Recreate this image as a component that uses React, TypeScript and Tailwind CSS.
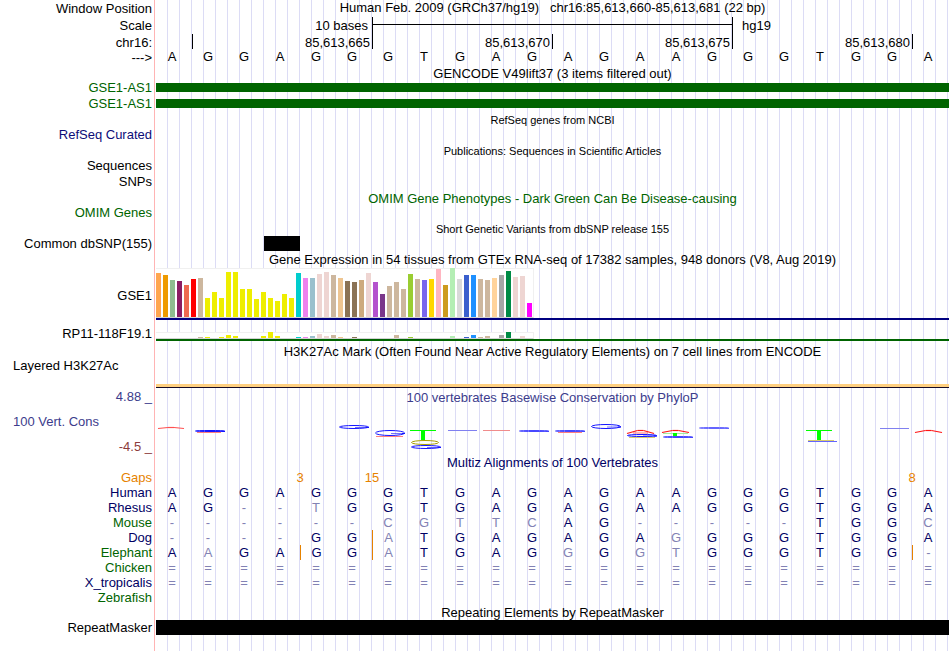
import type { ReactNode } from "react";
import clsx from "clsx";

const reference = "AGGAGGGTGAGAGAAGGGTGGA";

const positions = ["85,613,665", "85,613,670", "85,613,675", "85,613,680"];

// gaps: base index that an insertion marker stands in front of
const species = [
  { name: "Human", green: false, bases: reference, gaps: [] },
  { name: "Rhesus", green: false, bases: "AG--TGGTGAGAGAAGGGTGGA", gaps: [] },
  { name: "Mouse", green: true, bases: "------CGTTCAG-----TGGC", gaps: [] },
  { name: "Dog", green: false, bases: "----GGATGAGAGAGGGGTGGA", gaps: [6] },
  {
    name: "Elephant",
    green: true,
    bases: "AAGAGGATGAGGGGTGGGTGG-",
    gaps: [4, 6, 21],
  },
  { name: "Chicken", green: true, bases: "======================", gaps: [] },
  {
    name: "X_tropicalis",
    green: false,
    bases: "======================",
    gaps: [],
  },
  { name: "Zebrafish", green: true, bases: "", gaps: [] },
];

// [colour, GSE1 height, RP11-118F19.1 height]
const tissues: [string, number, number][] = [
  ["#ffa54f", 44, 0],
  ["#ee9a00", 42, 0],
  ["#8fbc8f", 37, 0],
  ["#8b1c62", 36, 0],
  ["#ee6a50", 32, 0],
  ["#ff0000", 38, 0],
  ["#cdb79e", 39, 1],
  ["#eeee00", 19, 1],
  ["#eeee00", 25, 0],
  ["#eeee00", 19, 1],
  ["#eeee00", 45, 3],
  ["#eeee00", 45, 2],
  ["#eeee00", 28, 0],
  ["#eeee00", 28, 0],
  ["#eeee00", 18, 0],
  ["#eeee00", 25, 2],
  ["#eeee00", 19, 6],
  ["#eeee00", 16, 2],
  ["#eeee00", 23, 0],
  ["#eeee00", 19, 0],
  ["#00cdcd", 44, 1],
  ["#ee82ee", 39, 1],
  ["#9ac0cd", 39, 2],
  ["#eed5d2", 43, 4],
  ["#eed5d2", 45, 2],
  ["#cdb79e", 42, 3],
  ["#eec591", 39, 1],
  ["#8b7355", 36, 0],
  ["#8b7355", 35, 1],
  ["#cdaa7d", 37, 0],
  ["#eed5d2", 44, 0],
  ["#b452cd", 35, 0],
  ["#7a378b", 23, 0],
  ["#cdb79e", 31, 0],
  ["#cdb79e", 35, 3],
  ["#cdb79e", 28, 0],
  ["#9acd32", 43, 1],
  ["#cdb79e", 38, 0],
  ["#7a67ee", 37, 0],
  ["#ffd700", 38, 0],
  ["#ffb6c1", 48, 0],
  ["#cd9b1d", 32, 0],
  ["#b4eeb4", 49, 2],
  ["#d9d9d9", 38, 0],
  ["#3a5fcd", 42, 1],
  ["#1e90ff", 42, 3],
  ["#cdb79e", 38, 1],
  ["#cdb79e", 37, 2],
  ["#ffd39b", 39, 0],
  ["#a6a6a6", 42, 3],
  ["#008b45", 46, 6],
  ["#eed5d2", 40, 0],
  ["#eed5d2", 41, 2],
  ["#ff00ff", 14, 0],
];

type Mark = {
  kind: "peak" | "loop" | "post" | "line";
  x: number;
  y: number;
  w: number;
  h: number;
  color: string;
};

const blue = "#1414ff";
const red = "#ff1414";
const lime = "#00ff00";
const olive = "#a8a000";

const marks: Mark[] = [
  { kind: "peak", x: 2, y: 19, w: 26, h: 2, color: "#ff5050" },
  { kind: "line", x: 41, y: 24, w: 24, h: 1, color: "#ff8080" },
  { kind: "loop", x: 39, y: 22, w: 30, h: 2, color: blue },
  { kind: "loop", x: 183, y: 17, w: 30, h: 4, color: blue },
  { kind: "loop", x: 219, y: 22, w: 30, h: 6, color: blue },
  { kind: "line", x: 220, y: 28, w: 27, h: 1, color: "#ff8080" },
  { kind: "post", x: 254, y: 22, w: 26, h: 10, color: lime },
  { kind: "loop", x: 255, y: 32, w: 28, h: 5, color: olive },
  { kind: "loop", x: 255, y: 37, w: 30, h: 4, color: blue },
  { kind: "line", x: 292, y: 22, w: 29, h: 1, color: "#8080f0" },
  { kind: "line", x: 327, y: 22, w: 27, h: 1, color: "#f08c8c" },
  { kind: "loop", x: 363, y: 22, w: 30, h: 2, color: "#4646ff" },
  { kind: "line", x: 402, y: 24, w: 24, h: 1, color: "#ff8080" },
  { kind: "loop", x: 399, y: 22, w: 30, h: 2, color: "#4646ff" },
  { kind: "loop", x: 435, y: 16, w: 30, h: 5, color: blue },
  { kind: "line", x: 473, y: 29, w: 26, h: 1, color: "#d8cc70" },
  { kind: "loop", x: 471, y: 26, w: 30, h: 3, color: blue },
  { kind: "peak", x: 471, y: 22, w: 27, h: 4, color: red },
  { kind: "line", x: 507, y: 25, w: 25, h: 1, color: "#a0f0a0" },
  { kind: "peak", x: 506, y: 22, w: 27, h: 3, color: red },
  { kind: "loop", x: 507, y: 28, w: 30, h: 2, color: "#4646ff" },
  { kind: "line", x: 517, y: 25, w: 4, h: 3, color: lime },
  { kind: "loop", x: 543, y: 19, w: 30, h: 2, color: "#6464ff" },
  { kind: "post", x: 650, y: 22, w: 26, h: 10, color: lime },
  { kind: "line", x: 652, y: 32, w: 26, h: 1, color: "#d8cc70" },
  { kind: "line", x: 652, y: 33, w: 29, h: 1, color: "#6464ff" },
  { kind: "line", x: 724, y: 20, w: 29, h: 1, color: "#8080f0" },
  { kind: "peak", x: 759, y: 22, w: 27, h: 3, color: red },
];

function ConservationMark({ kind, x, y, w, h, color }: Mark) {
  const mid = x + w / 2;

  if (kind === "peak") {
    return (
      <g stroke={color} strokeWidth={1.2}>
        <line x1={x} y1={y + h - 0.5} x2={mid - 3} y2={y + 0.5} />
        <line x1={mid - 3} y1={y + 0.5} x2={mid + 3} y2={y + 0.5} />
        <line x1={mid + 3} y1={y + 0.5} x2={x + w} y2={y + h - 0.5} />
        {h > 3 && (
          <line
            x1={x + 6}
            y1={y + h - 1}
            x2={x + w - 6}
            y2={y + h - 1}
            strokeWidth={0.6}
          />
        )}
      </g>
    );
  }

  if (kind === "loop") {
    return (
      <g stroke={color}>
        <ellipse
          cx={mid}
          cy={y + h / 2}
          rx={w / 2 - 0.5}
          ry={h / 2 - 0.5}
          fill="none"
        />
        {color !== olive && (
          <>
            <line
              x1={mid + 1}
              y1={y + h / 2 + 0.5}
              x2={x + w}
              y2={y + h / 2 + 0.5}
              strokeWidth={0.6}
            />
            <line
              x1={x + w - 3}
              y1={y + h / 2 + 0.5}
              x2={x + w}
              y2={y + h / 2 + 0.5}
            />
          </>
        )}
      </g>
    );
  }

  if (kind === "post") {
    return (
      <g fill={color}>
        <rect x={x} y={y} width={w} height={1} />
        <rect x={mid - 2} y={y} width={4} height={h} />
      </g>
    );
  }

  return <rect x={x} y={y} width={w} height={h} fill={color} />;
}

function Track({
  label,
  className,
  labelClass,
  children,
}: {
  label?: string;
  className?: string;
  labelClass?: string;
  children?: ReactNode;
}) {
  return (
    <div className={clsx("flex", className)}>
      <div
        className={clsx("w-[156px] shrink-0 pr-1 text-right", labelClass)}
      >
        {label}
      </div>
      <div className="min-w-0 flex-1">{children}</div>
    </div>
  );
}

function Title({
  className,
  children,
}: {
  className?: string;
  children: ReactNode;
}) {
  return (
    <h2 className={clsx("ml-[156px] text-center whitespace-pre", className)}>
      {children}
    </h2>
  );
}

function Expression({ gene }: { gene: 1 | 2 }) {
  return (
    <div
      className={clsx(
        "flex w-[378px] items-end gap-0.5 border-t border-r border-b border-[#f0f0f0] border-b-[#d2d2d2] bg-white",
        gene === 1 ? "h-[50px]" : "h-[7px]"
      )}
    >
      {tissues.map((tissue, i) => (
        <div
          key={i}
          className="w-[5px] shrink-0"
          style={{ height: tissue[gene], backgroundColor: tissue[0] }}
        />
      ))}
    </div>
  );
}

export default function App() {
  return (
    <main className="relative bg-white pr-px pb-4 font-['Liberation_Sans',Arial,sans-serif] text-[13px] leading-4 text-black">
      {/* guide lines, three to a base */}
      <div className="absolute inset-0 flex pr-0.5" aria-hidden="true">
        <div className="w-[155px] shrink-0 border-r border-[#ffb4b4]" />
        <div className="ml-px grid flex-1 grid-cols-[repeat(66,minmax(0,1fr))]">
          {Array.from({ length: 66 }, (_, i) => (
            <div key={i} className="border-r border-[#dcdcf5]" />
          ))}
        </div>
      </div>

      <div className="relative">
        <Track
          label="Window Position"
          className="h-[17px]"
          labelClass="leading-[18px]"
        >
          <h1 className="text-center whitespace-pre">
            {"Human Feb. 2009 (GRCh37/hg19)   chr16:85,613,660-85,613,681 (22 bp)"}
          </h1>
        </Track>

        <Track label="Scale" className="h-4 leading-[18px]">
          <div className="grid h-4 grid-cols-22 pr-px">
            <div className="col-span-6 pr-1 text-right">10 bases</div>
            <div className="col-span-10 border-l border-black pt-[7px]">
              <div className="h-px bg-black" />
            </div>
            <div className="col-span-6 border-l border-black pl-[9px]">
              hg19
            </div>
          </div>
        </Track>

        <Track label="chr16:" className="mt-px h-[15px] leading-[18px]">
          <div className="grid h-[15px] grid-cols-22 pr-px">
            <div />
            {positions.map((position) => (
              <div
                key={position}
                className="col-span-5 h-[15px] border-l border-black pr-0.5 text-right"
              >
                {position}
              </div>
            ))}
            <div className="h-[15px] border-l border-black" />
          </div>
        </Track>

        <Track label="--->" className="h-4" labelClass="leading-[18px]">
          <div className="grid grid-cols-22 pr-px text-center">
            {reference.split("").map((base, i) => (
              <span key={i} className="pr-1">
                {base}
              </span>
            ))}
          </div>
        </Track>

        <Title className="pt-px">
          GENCODE V49lift37 (3 items filtered out)
        </Title>
        {[0, 1].map((i) => (
          <Track
            key={i}
            label="GSE1-AS1"
            className="h-4"
            labelClass="text-[#006400] leading-3"
          >
            <div className="mt-px h-[9px] bg-[#006400]" />
          </Track>
        ))}

        <Title className="text-[11px] leading-[13px]">
          RefSeq genes from NCBI
        </Title>
        <Track
          label="RefSeq Curated"
          className="h-4"
          labelClass="text-[#0c0c78]"
        />

        <Title className="text-[11px]">
          Publications: Sequences in Scientific Articles
        </Title>
        <Track
          label="Sequences"
          className="h-[15px]"
          labelClass="leading-[14px]"
        />
        <Track label="SNPs" className="h-4" />

        <Title className="pt-px text-[#006400]">
          OMIM Gene Phenotypes - Dark Green Can Be Disease-causing
        </Title>
        <Track
          label="OMIM Genes"
          className="h-[14px]"
          labelClass="leading-3 text-[#006400]"
        />

        <Title className="pt-px text-[11px] leading-[14px]">
          Short Genetic Variants from dbSNP release 155
        </Title>
        <Track label="Common dbSNP(155)" className="h-[15px]">
          <div className="grid h-[15px] grid-cols-22 pr-px">
            <div className="col-start-4 bg-black" />
          </div>
        </Track>

        <Title className="pt-px">
          Gene Expression in 54 tissues from GTEx RNA-seq of 17382 samples, 948
          donors (V8, Aug 2019)
        </Title>
        <Track label="GSE1" className="items-center" labelClass="pt-1">
          <Expression gene={1} />
          <div className="h-0.5 bg-[#000080]" />
        </Track>
        <Track
          label="RP11-118F19.1"
          className="mt-[5px] h-4"
          labelClass="leading-[18px]"
        >
          <div className="pt-[7px]">
            <Expression gene={2} />
            <div className="h-0.5 bg-[#006400]" />
          </div>
        </Track>

        <Title className="mt-0.5 pt-px">
          H3K27Ac Mark (Often Found Near Active Regulatory Elements) on 7 cell
          lines from ENCODE
        </Title>
        <div className="h-6 pl-[13px] leading-3">Layered H3K27Ac</div>
        <div className="ml-[156px] h-1 border-b border-[#140a28] bg-[#ffd080]" />

        <div className="flex text-[#3c3c8c]">
          <div className="flex w-[156px] shrink-0 flex-col pr-1 text-right leading-[18px]">
            <span>4.88 _</span>
            <span className="pl-[13px] text-left leading-8">
              100 Vert. Cons
            </span>
            <span className="text-[#8c3c3c]">-4.5 _</span>
          </div>
          <div className="min-w-0 flex-1">
            <h2 className="text-center leading-5">
              100 vertebrates Basewise Conservation by PhyloP
            </h2>
            <svg
              viewBox="0 0 793 48"
              preserveAspectRatio="none"
              className="h-12 w-full"
              role="img"
              aria-label="PhyloP scores"
            >
              {marks.map((mark, i) => (
                <ConservationMark key={i} {...mark} />
              ))}
            </svg>
          </div>
        </div>

        <Title className="leading-[14px] text-[#000064]">
          Multiz Alignments of 100 Vertebrates
        </Title>
        <div className="pr-px">
          <table className="w-full table-fixed text-center leading-[15px] text-[#000064]">
            <colgroup>
              <col className="w-[156px]" />
              <col span={22} />
            </colgroup>
            <tbody>
              <tr className="text-[#e68200]">
                <th className="p-0 pr-1 text-right font-normal">Gaps</th>
                <td colSpan={3} className="p-0" />
                <td colSpan={2} className="p-0">
                  3
                </td>
                <td colSpan={2} className="p-0">
                  15
                </td>
                <td colSpan={13} className="p-0" />
                <td colSpan={2} className="p-0">
                  8
                </td>
              </tr>
              {species.map(({ name, green, bases, gaps }) => (
                <tr key={name}>
                  <th
                    className={clsx(
                      "p-0 pr-1 text-right font-normal",
                      green && "text-[#006400]"
                    )}
                  >
                    {name}
                  </th>
                  {bases.split("").map((base, i) => (
                    <td
                      key={i}
                      className={clsx(
                        "p-0",
                        base !== reference[i] && "text-[#8282b4]"
                      )}
                    >
                      <div
                        className={clsx(
                          "pr-1",
                          (gaps as number[]).includes(i) &&
                            "border-l border-[#e68200]"
                        )}
                      >
                        {base}
                      </div>
                    </td>
                  ))}
                </tr>
              ))}
            </tbody>
          </table>
        </div>

        <Title className="leading-[15px]">
          Repeating Elements by RepeatMasker
        </Title>
        <Track label="RepeatMasker" className="h-[15px]">
          <div className="h-[15px] bg-black" />
        </Track>
      </div>
    </main>
  );
}
